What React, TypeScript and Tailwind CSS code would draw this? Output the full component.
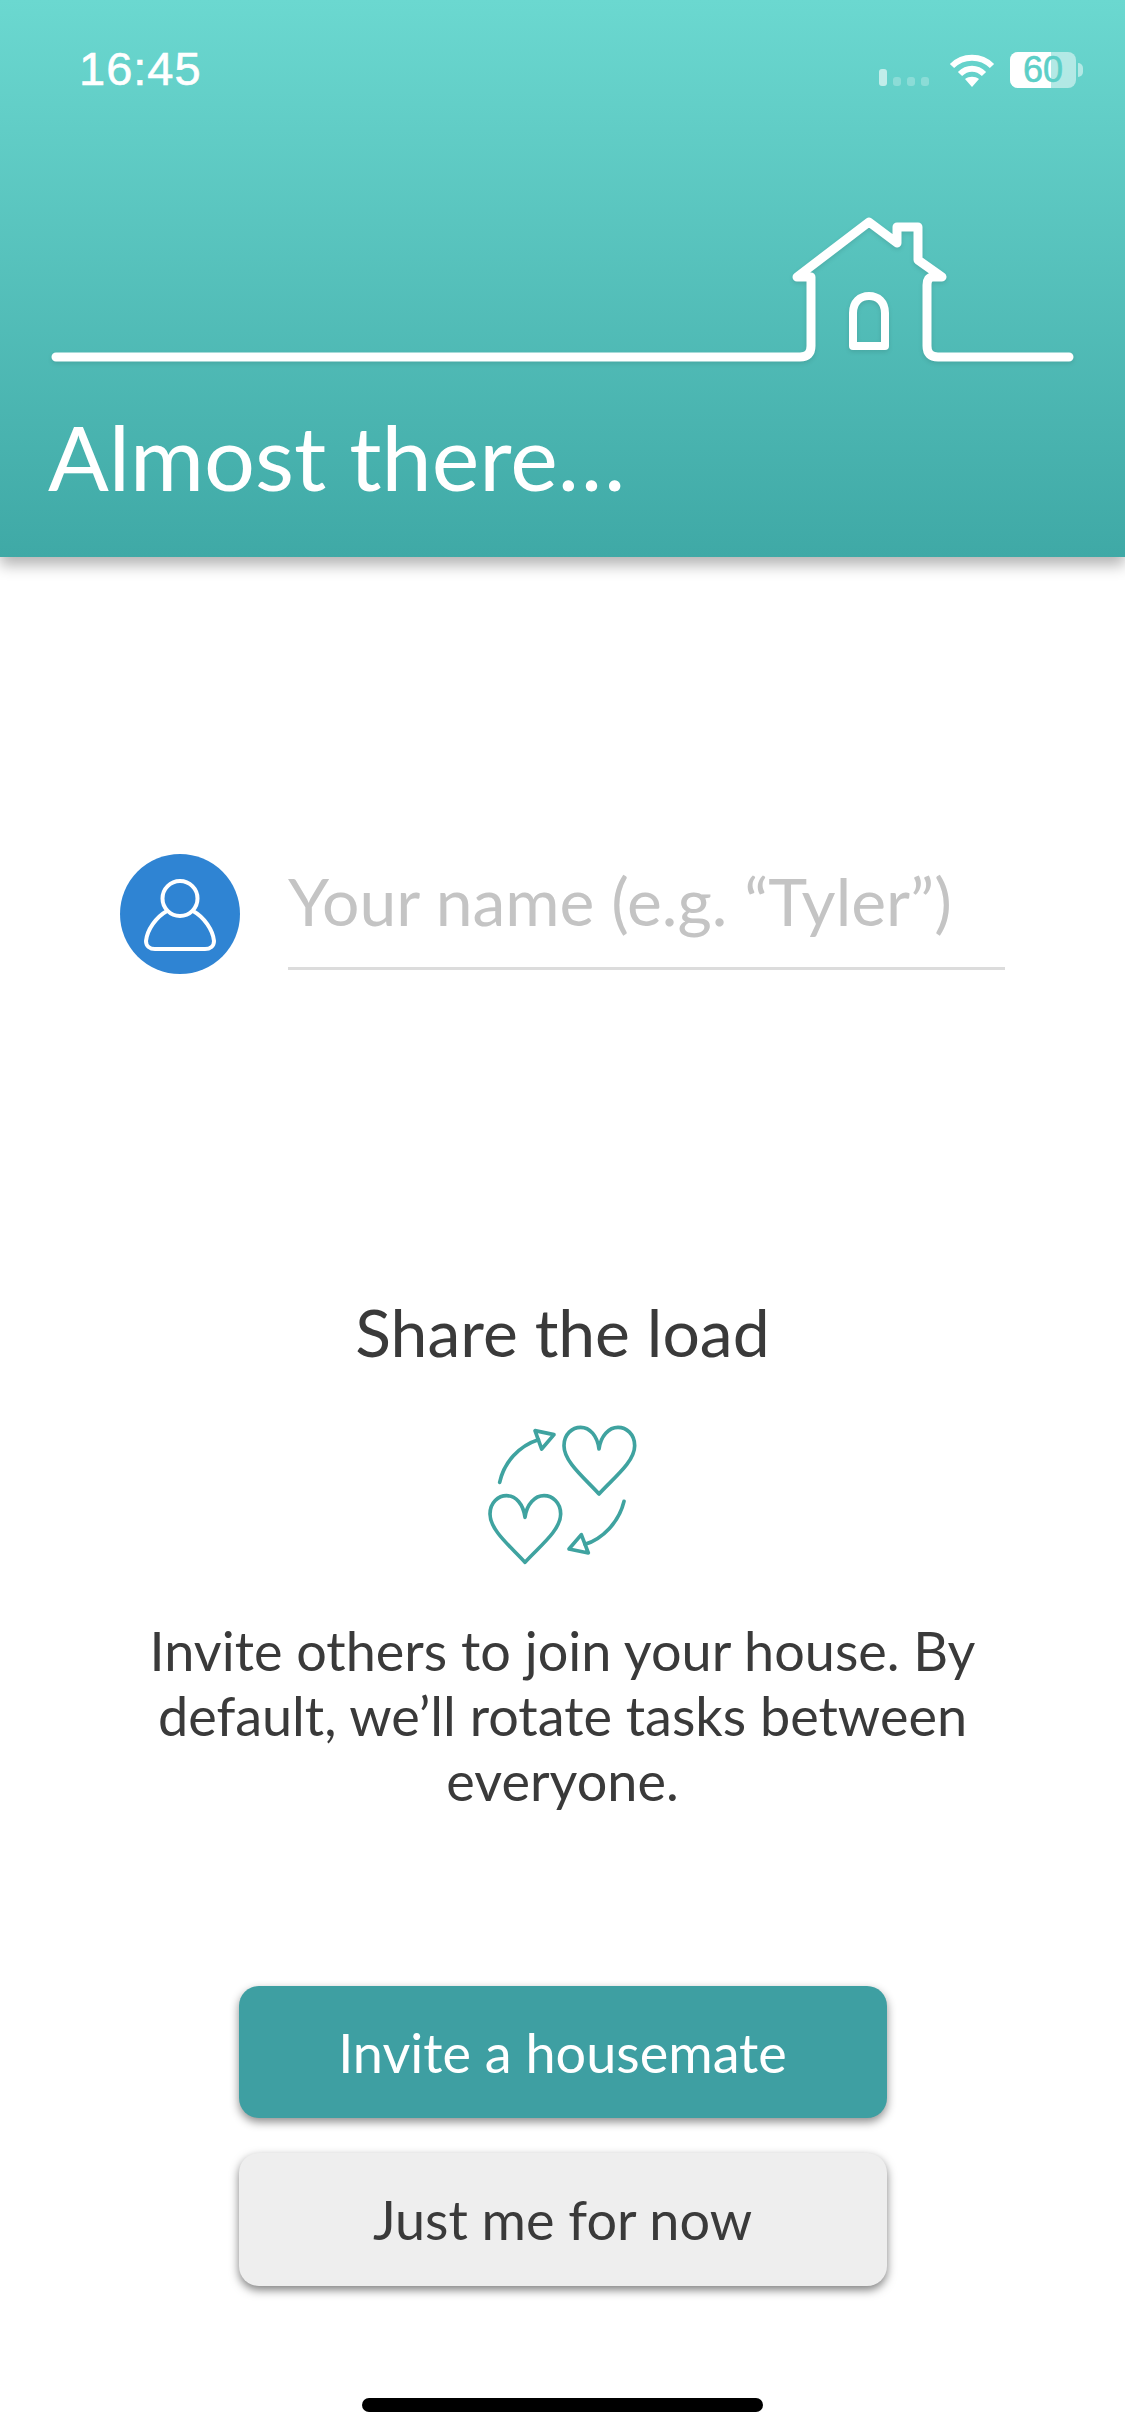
const lato = { fontFamily: "Lato, 'Noto Sans', sans-serif" };

function StatusBar() {
  return (
    <div className="flex h-[94px] items-end justify-between pl-[79px] pr-[42px]">
      <span className="text-[47px] leading-[50px] font-['Liberation_Sans',sans-serif] tracking-[1px] text-white [-webkit-text-stroke:0.6px_#fff]">16:45</span>
      <div className="flex items-center pb-[6px]">
        {/* signal */}
        <div className="mr-[20px] flex items-end gap-[6px] self-end pb-[2px]">
          <div className="h-[17px] w-[8px] rounded-[3px] bg-white/60" />
          <div className="h-[9px] w-[8px] rounded-[3px] bg-white/25" />
          <div className="h-[9px] w-[8px] rounded-[3px] bg-white/25" />
          <div className="h-[9px] w-[8px] rounded-[3px] bg-white/25" />
        </div>
        <svg className="mr-[15px] h-[34px] w-[46px]" viewBox="0 0 46 34" fill="none">
          <path d="M3 13 C14 2 32 2 43 13" stroke="#fff" strokeWidth="6" strokeLinecap="butt" />
          <path d="M11 21 C18 14 28 14 35 21" stroke="#fff" strokeWidth="6" />
          <path d="M23 34 L16 26 C20 23 26 23 30 26 Z" fill="#fff" />
        </svg>
        {/* battery */}
        <div className="relative flex h-[36px] w-[66px] items-center justify-center rounded-[8px] bg-white/50">
          <div className="absolute inset-y-0 left-0 w-[41px] rounded-l-[8px] bg-white" />
          <span className="relative text-[36px] leading-[36px] font-['Liberation_Sans',sans-serif] text-[#5ccfc7] [-webkit-text-stroke:0.6px_#5ccfc7]">60</span>
        </div>
        <div className="ml-[2px] h-[14px] w-[5px] rounded-r-full bg-white/50" />
      </div>
    </div>
  );
}

function HouseLine() {
  return (
    <svg className="block h-[190px] w-[1125px] drop-shadow-[0_2px_2px_rgba(0,0,0,0.1)]" viewBox="0 200 1125 190" fill="none">
      <path
        d="M56 357 H800 Q811 357 811 346 V277 H797 L869 222 L897 243 V227 H918 V260 L942 277 H933 Q927 277 927 285 V346 Q927 357 938 357 H1069"
        stroke="#fff"
        strokeWidth="9"
        strokeLinecap="round"
        strokeLinejoin="round"
      />
      <path
        d="M853 346 V313 C853 302 860 296 869 296 C878 296 885 302 885 313 V346 Z"
        stroke="#fff"
        strokeWidth="8"
        strokeLinejoin="round"
      />
    </svg>
  );
}

function PersonIcon() {
  return (
    <svg className="h-[120px] w-[120px] shrink-0" viewBox="0 0 120 120" fill="none">
      <circle cx="60" cy="60" r="60" fill="#2f84d3" />
      <circle cx="60" cy="44.5" r="17.5" stroke="#fff" strokeWidth="4" />
      <path
        d="M47 57 C36 63 27 76 26 87 C26 92 30 95 35 95 H85 C90 95 94 92 94 87 C93 76 84 63 73 57"
        stroke="#fff"
        strokeWidth="4"
      />
    </svg>
  );
}

function HeartsIcon() {
  const heart =
    "C350 240 285 190 285 140 C285 105 310 85 335 85 C362 85 385 110 390 150 C395 110 420 85 447 85 C472 85 497 105 497 140 C497 190 430 240 390 285 Z";
  return (
    <svg className="ml-[3px] block h-[180px] w-[190px]" viewBox="0 0 570 540" fill="none" stroke="#3fa3a0" strokeWidth="11" strokeLinejoin="round" strokeLinecap="round">
      <path d={`M390 285 ${heart}`} />
      <path d={`M390 285 ${heart}`} transform="translate(-222 205)" />
      <path d="M92 250 C105 190 150 140 208 122" />
      <path d="M198 95 L255 107 L218 150 Z" />
      <path d="M465 307 C450 370 400 420 348 436" />
      <path d="M337 407 L300 450 L358 462 Z" />
    </svg>
  );
}

export default function App() {
  return (
    <div className="relative flex h-[2436px] w-[1125px] flex-col overflow-hidden bg-white text-[#3a3a3a]" style={lato}>
      <header className="z-10 h-[557px] bg-gradient-to-b from-[#6bd8d0] to-[#3fa9a6] shadow-[0_8px_14px_rgba(0,0,0,0.3)]">
        <StatusBar />
        <div className="mt-[106px]">
          <HouseLine />
        </div>
        <h1 className="mt-[16px] pl-[48px] text-[90px] leading-[100px] font-normal text-white">Almost there…</h1>
      </header>

      <div className="mt-[297px] flex items-center pl-[120px]">
        <PersonIcon />
        <div className="ml-[48px] flex h-[112px] w-[717px] items-start border-b-[3px] border-[#dcdcdc] pt-[10px]">
          <span className="text-[66px] leading-none text-[#c4c4c4]">Your name (e.g. “Tyler”)</span>
        </div>
      </div>

      <div className="mt-[318px] flex flex-col items-center">
        <h2 className="text-[66px] leading-[80px] font-normal">Share the load</h2>
        <div className="mt-[27px]">
          <HeartsIcon />
        </div>
        <p className="mt-[39px] w-[860px] text-center text-[54px] leading-[65px]">
          Invite others to join your house. By default, we’ll rotate tasks between everyone.
        </p>
      </div>

      <div className="mt-[173px] flex flex-col items-center gap-[35px]">
        <button className="h-[132px] w-[648px] rounded-[20px] bg-[#3e9fa2] text-[54px] text-white shadow-[0_4px_10px_rgba(0,0,0,0.45)]">
          Invite a housemate
        </button>
        <button className="h-[133px] w-[648px] rounded-[20px] bg-[#eeeeee] text-[54px] shadow-[0_4px_10px_rgba(0,0,0,0.5)]">
          Just me for now
        </button>
      </div>

      <div className="absolute bottom-[24px] left-[362px] h-[14px] w-[401px] rounded-full bg-black" />
    </div>
  );
}
